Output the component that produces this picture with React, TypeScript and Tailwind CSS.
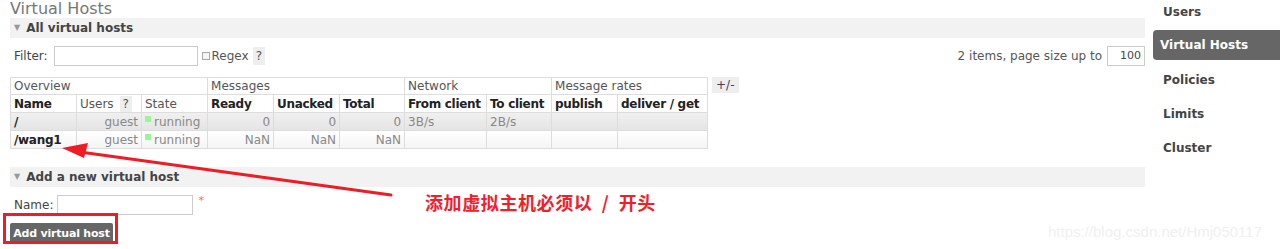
import React from "react";

const font = { fontFamily: '"DejaVu Sans", Verdana, sans-serif' };

function SectionHeader({ title }: { title: string }) {
  return (
    <div className="flex items-center h-[20px] bg-[#f2f2f2] pl-[4px]">
      <span className="text-[#999] text-[8px] mr-[6px] leading-none">▼</span>
      <span className="text-[12px] font-bold text-[#444]">{title}</span>
    </div>
  );
}

const th = "border border-[#ddd] px-[3px] text-left whitespace-nowrap overflow-hidden";
const bold = " font-bold text-[#222] tracking-[-0.3px]";

export default function App() {
  const cols = [66, 65, 66, 66, 66, 65, 82, 65, 66, 90];
  return (
    <div className="relative w-[1280px] h-[249px] bg-white overflow-hidden text-[12px] text-[#444]" style={font}>
      <div className="flex">
        <div className="w-[1135px] ml-[10px]">
          <div className="text-[16px] text-[#777] leading-[19px] h-[19px] -mt-[1px]">Virtual Hosts</div>
          <SectionHeader title="All virtual hosts" />
          <div className="flex items-center justify-between mt-[8px] h-[20px]">
            <div className="flex items-center">
              <span className="ml-[4px] mr-[6px] text-[#444]">Filter:</span>
              <div className="w-[144px] h-[20px] border border-[#ccc] bg-white" />
              <div className="w-[8px] h-[8px] border border-[#aaa] bg-[#f4f4f4] ml-[4px] mr-[2px]" />
              <span className="text-[#555]">Regex</span>
              <span className="ml-[4px] bg-[#eee] px-[3px] text-[#555]">?</span>
            </div>
            <div className="flex items-center">
              <span className="text-[#555] mr-[5px]">2 items, page size up to</span>
              <div className="w-[38px] h-[20px] border border-[#ccc] text-right pr-[3px] text-[11px] leading-[18px] text-[#444]">100</div>
            </div>
          </div>
          <div className="flex items-start mt-[11px]">
            <table className="border-collapse text-[12px]" style={{ tableLayout: "fixed", width: 697 }}>
              <colgroup>
                {cols.map((w, i) => (
                  <col key={i} style={{ width: w }} />
                ))}
              </colgroup>
              <tbody>
                <tr className="h-[17px] leading-[15px]">
                  <td colSpan={3} className={th + " text-[#555]"}>Overview</td>
                  <td colSpan={3} className={th + " text-[#555]"}>Messages</td>
                  <td colSpan={2} className={th + " text-[#555]"}>Network</td>
                  <td colSpan={2} className={th + " text-[#555]"}>Message rates</td>
                </tr>
                <tr className="h-[18px] leading-[16px]">
                  <td className={th + bold}>Name</td>
                  <td className={th + " text-[#555] pr-0"}>
                    <div className="flex items-center">
                      <span>Users</span>
                      <span className="ml-[6px] bg-[#eee] px-[3px]">?</span>
                    </div>
                  </td>
                  <td className={th + " text-[#555]"}>State</td>
                  <td className={th + bold}>Ready</td>
                  <td className={th + bold}>Unacked</td>
                  <td className={th + bold}>Total</td>
                  <td className={th + bold}>From client</td>
                  <td className={th + bold}>To client</td>
                  <td className={th + bold}>publish</td>
                  <td className={th + bold}>deliver / get</td>
                </tr>
                {[
                  { name: "/", n: "0", fc: "3B/s", tc: "2B/s", bg: "bg-gradient-to-b from-[#f0f0f0] to-[#e4e4e4]" },
                  { name: "/wang1", n: "NaN", fc: "", tc: "", bg: "bg-gradient-to-b from-[#ffffff] to-[#f4f4f4]" },
                ].map((r) => (
                  <tr key={r.name} className={"h-[18px] leading-[16px] " + r.bg}>
                    <td className={th + bold}>{r.name}</td>
                    <td className={th + " text-[#888] text-right"}>guest</td>
                    <td className={th + " text-[#888]"}>
                      <span className="inline-block w-[6px] h-[6px] bg-[#98f898] mr-[3px] align-[4px]" />
                      running
                    </td>
                    <td className={th + " text-[#888] text-right"}>{r.n}</td>
                    <td className={th + " text-[#888] text-right"}>{r.n}</td>
                    <td className={th + " text-[#888] text-right"}>{r.n}</td>
                    <td className={th + " text-[#888]"}>{r.fc}</td>
                    <td className={th + " text-[#888]"}>{r.tc}</td>
                    <td className={th}></td>
                    <td className={th}></td>
                  </tr>
                ))}
              </tbody>
            </table>
            <div className="ml-[4px] bg-[#eee] px-[4px] h-[16px] leading-[16px] text-[#444]">+/-</div>
          </div>
          <div className="mt-[18px]">
            <SectionHeader title="Add a new virtual host" />
          </div>
          <div className="flex items-center mt-[8px] h-[20px]">
            <span className="ml-[4px] mr-[4px] text-[#444]">Name:</span>
            <div className="w-[136px] h-[20px] border border-[#ccc] bg-white" />
            <span className="ml-[5px] text-[#f66] text-[11px] self-start -mt-[2px]">*</span>
          </div>
          <div className="mt-[8px]">
            <button className="bg-[#666] text-white font-bold text-[11px] tracking-[-0.2px] h-[21px] w-[103px] rounded-[2px] leading-[21px] text-center" style={font}>
              Add virtual host
            </button>
          </div>
        </div>
        <div className="ml-[8px] flex-1 pt-[4px] text-[12px] font-bold text-[#444]">
          <div className="h-[26px] leading-[16px] pl-[10px]">Users</div>
          <div className="h-[30px] leading-[30px] pl-[7px] bg-[#666] text-white rounded-l-[4px]">Virtual Hosts</div>
          <div className="h-[34px] leading-[40px] pl-[10px]">Policies</div>
          <div className="h-[34px] leading-[40px] pl-[10px]">Limits</div>
          <div className="h-[34px] leading-[40px] pl-[10px]">Cluster</div>
        </div>
      </div>

      {/* annotations */}
      <svg className="absolute left-0 top-0 pointer-events-none" width="1280" height="249">
        <line x1="391" y1="195" x2="80" y2="152" stroke="#ee1c25" strokeWidth="3" strokeLinecap="round" />
        <polygon points="62,148 88,143 84,158" fill="#ee1c25" />
        <rect x="4.5" y="214.5" width="112" height="28" fill="none" stroke="#ee1c25" strokeWidth="3" />
      </svg>
      <div
        className="absolute left-[425px] top-[190px] text-[18px] tracking-[0.6px] font-bold text-[#f0202a] whitespace-pre leading-[24px]"
        style={{ fontFamily: '"Noto Sans CJK SC", sans-serif' }}
      >
        添加虚拟主机必须以  /  开头
      </div>
      <div
        className="absolute left-[1048px] top-[221px] text-[15px] text-[#f0f0f0]"
        style={{ fontFamily: '"Liberation Sans", Arial, sans-serif' }}
      >
        https://blog.csdn.net/Hmj050117
      </div>
    </div>
  );
}
